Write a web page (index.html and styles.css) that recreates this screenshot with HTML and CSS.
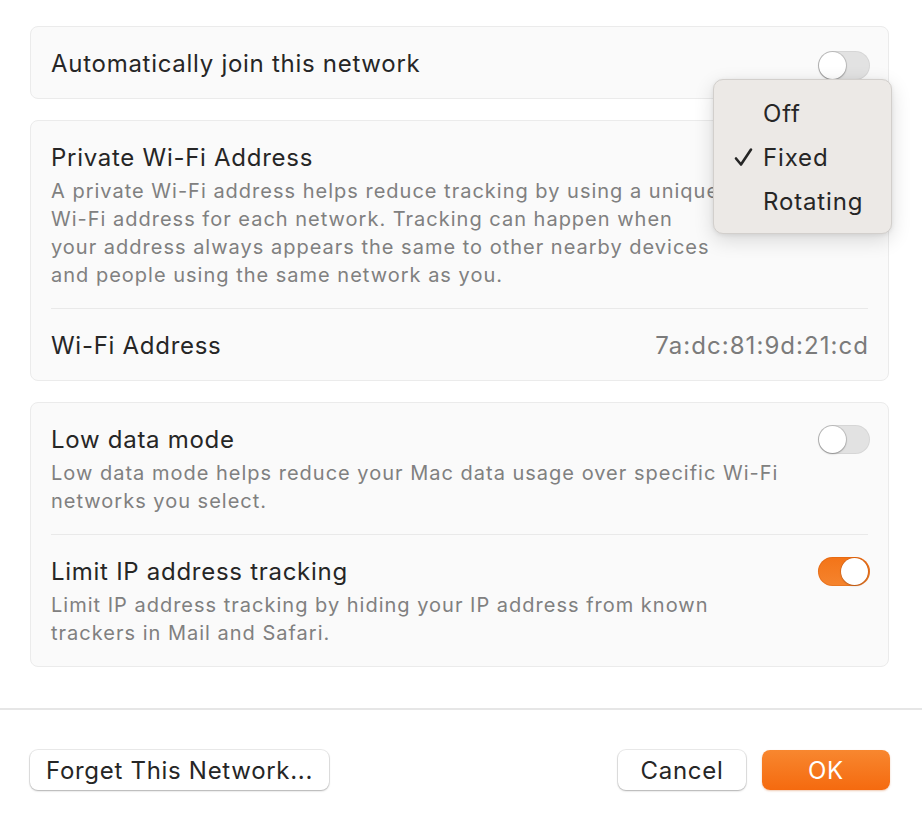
FILE: index.html
```html
<!DOCTYPE html>
<html lang="en">
<head>
<meta charset="utf-8">
<title>Wi-Fi Network Settings</title>
<link rel="stylesheet" href="styles.css">
</head>
<body>
<div class="sheet">
  <div class="content">
    <section class="card">
      <div class="row row-center">
        <div class="row-text">
          <div class="title">Automatically join this network</div>
        </div>
        <div class="toggle"><span class="knob"></span></div>
      </div>
    </section>

    <section class="card">
      <div class="row">
        <div class="row-text">
          <div class="title">Private Wi-Fi Address</div>
          <p class="desc">A private Wi-Fi address helps reduce tracking by using a unique<br>Wi-Fi address for each network. Tracking can happen when<br>your address always appears the same to other nearby devices<br>and people using the same network as you.</p>
        </div>
      </div>
      <div class="row row-center">
        <div class="row-text">
          <div class="title">Wi-Fi Address</div>
        </div>
        <div class="value">7a:dc:81:9d:21:cd</div>
      </div>
    </section>

    <section class="card">
      <div class="row">
        <div class="row-text">
          <div class="title">Low data mode</div>
          <p class="desc">Low data mode helps reduce your Mac data usage over specific Wi-Fi<br>networks you select.</p>
        </div>
        <div class="toggle"><span class="knob"></span></div>
      </div>
      <div class="row">
        <div class="row-text">
          <div class="title">Limit IP address tracking</div>
          <p class="desc">Limit IP address tracking by hiding your IP address from known<br>trackers in Mail and Safari.</p>
        </div>
        <div class="toggle on"><span class="knob"></span></div>
      </div>
    </section>

    <div class="menu">
      <div class="menu-item"><span class="check"></span>Off</div>
      <div class="menu-item"><span class="check"><svg width="19" height="20" viewBox="0 0 19 20"><path d="M2 11.5 L7 17.5 L17 2.5" fill="none" stroke="#262626" stroke-width="2.6" stroke-linecap="round" stroke-linejoin="round"/></svg></span>Fixed</div>
      <div class="menu-item"><span class="check"></span>Rotating</div>
    </div>
  </div>

  <footer class="footer">
    <button class="btn">Forget This Network...</button>
    <div class="footer-right">
      <button class="btn btn-cancel">Cancel</button>
      <button class="btn btn-primary">OK</button>
    </div>
  </footer>
</div>
</body>
</html>
```

FILE: styles.css
```css
* { box-sizing: border-box; }

html, body {
  margin: 0;
  padding: 0;
  background: #ffffff;
}

body {
  font-family: Inter, "Noto Sans", "Liberation Sans", sans-serif;
  color: #262626;
  width: 922px;
  height: 822px;
  overflow: hidden;
}

.sheet {
  display: flex;
  flex-direction: column;
}

.content {
  position: relative;
  padding: 26px 33px 0 30px;
  display: flex;
  flex-direction: column;
  gap: 21px;
}

.card {
  background: #fafafa;
  border: 1px solid #ebebeb;
  border-radius: 8px;
  padding: 0 20px;
}

.row {
  display: flex;
  align-items: flex-start;
  justify-content: space-between;
  padding: 22px 0 19px;
}

.row + .row {
  border-top: 1px solid #e9e9e9;
}

.row-center {
  align-items: center;
}

.title {
  font-size: 24px;
  line-height: 30px;
  letter-spacing: 0.72px;
  color: #262626;
}

.desc {
  margin: 4px 0 0;
  font-size: 20px;
  line-height: 28px;
  letter-spacing: 1px;
  color: #808080;
  white-space: nowrap;
}

.value {
  font-size: 24px;
  line-height: 30px;
  letter-spacing: 1.05px;
  color: #7b7b7b;
  margin-right: -1px;
}

.toggle {
  position: relative;
  flex: none;
  width: 52px;
  height: 29px;
  border-radius: 15px;
  background: #e2e2e2;
  box-shadow: inset 0 0 0 1px rgba(0,0,0,0.05);
  margin-top: 0;
  margin-right: -2px;
}

.row-center .toggle { margin-top: 1px; margin-bottom: -1px; }

.toggle .knob {
  position: absolute;
  top: 1px;
  left: 1px;
  width: 27px;
  height: 27px;
  border-radius: 50%;
  background: #ffffff;
  box-shadow: 0 0 0 1px rgba(0,0,0,0.12), 0 1px 2px rgba(0,0,0,0.25);
}

.toggle.on {
  background: linear-gradient(180deg, #f37418 0%, #f5842e 100%);
  box-shadow: inset 0 0 0 1px rgba(200,80,0,0.25);
}

.toggle.on .knob {
  left: auto;
  right: 2px;
  box-shadow: 0 0 0 0.5px rgba(160,60,0,0.4), 0 1px 2px rgba(0,0,0,0.2);
}

.menu {
  position: absolute;
  top: 79px;
  left: 713px;
  width: 179px;
  padding: 11px 0 10px;
  background: #ece9e6;
  border: 1px solid #d2cfcc;
  border-radius: 10px;
  box-shadow: 0 6px 20px rgba(0,0,0,0.14), 0 1px 4px rgba(0,0,0,0.08);
}

.menu-item {
  display: flex;
  align-items: center;
  height: 44px;
  font-size: 24px;
  letter-spacing: 0.85px;
  color: #262626;
}

.check {
  display: flex;
  align-items: center;
  justify-content: flex-end;
  width: 49px;
  padding-right: 10px;
}

.footer {
  margin-top: 41px;
  border-top: 2px solid #e6e6e6;
  padding: 40px 32px 0 30px;
  display: flex;
  justify-content: space-between;
  align-items: center;
}

.footer-right {
  display: flex;
  gap: 16px;
}

.btn {
  font-family: inherit;
  font-size: 24px;
  letter-spacing: 0.7px;
  color: #262626;
  height: 40px;
  padding: 0 16px;
  border: none;
  border-radius: 8px;
  background: #ffffff;
  box-shadow: 0 0 0 1px rgba(0,0,0,0.08), 0 1px 2px rgba(0,0,0,0.25);
}

.btn-cancel {
  width: 128px;
}

.btn-primary {
  width: 128px;
  color: #ffffff;
  background: linear-gradient(180deg, #f8872f 0%, #f56a0f 100%);
  box-shadow: 0 1px 2px rgba(200,80,0,0.3);
}
```
